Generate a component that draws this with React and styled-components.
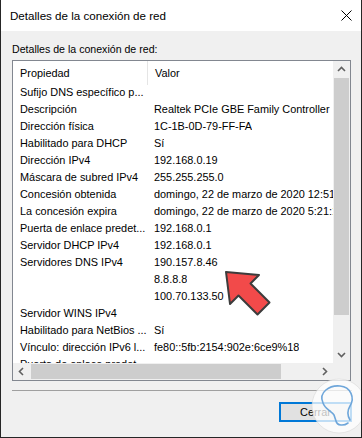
import React from "react";
import styled, { createGlobalStyle } from "styled-components";

const Global = createGlobalStyle`
  html, body { margin: 0; padding: 0; background: #f0f0f0; }
  * { box-sizing: border-box; }
`;

const FONT = `"Liberation Sans", Arial, sans-serif`;

const Window = styled.div`
  position: relative;
  width: 362px;
  height: 438px;
  background: #f0f0f0;
  border: 1px solid #262626;
  border-top: none;
  font-family: ${FONT};
  color: #000;
  display: flex;
  flex-direction: column;
  overflow: hidden;
`;

const TitleBar = styled.div`
  height: 31px;
  flex: none;
  background: #fff;
  display: flex;
  align-items: center;
  justify-content: space-between;
  padding: 0 9px 0 9px;
  font-size: 11.6px;
`;

const Body = styled.div`
  flex: 1;
  display: flex;
  flex-direction: column;
  padding: 11px 10px 0 11px;
`;

const GroupLabel = styled.div`
  font-size: 10.6px;
  line-height: 14px;
  height: 14px;
  margin-bottom: 4px;
  white-space: nowrap;
`;

const ListBox = styled.div`
  height: 321px;
  border: 1px solid #828790;
  background: #fff;
  display: grid;
  grid-template-columns: 1fr 17px;
  grid-template-rows: 1fr 17px;
`;

const Content = styled.div`
  overflow: hidden;
  font-size: 10.9px;
  white-space: nowrap;
`;

const HeaderRow = styled.div`
  display: flex;
  height: 23px;
  line-height: 23px;
  padding-top: 1px;
`;

const HeaderCell = styled.div`
  flex: none;
  width: ${(p) => (p.$first ? "134px" : "auto")};
  padding-left: 7px;
  border-left: ${(p) => (p.$first ? "none" : "1px solid #e5e5e5")};
  margin-top: -1px;
  padding-top: 1px;
  height: 24px;
`;

const Row = styled.div`
  display: flex;
  height: 17px;
  line-height: 17px;
`;

const Cell = styled.div`
  flex: none;
  width: ${(p) => (p.$first ? "134px" : "auto")};
  padding-left: 7px;
  overflow: hidden;
`;

const VScroll = styled.div`
  background: #f0f0f0;
  display: flex;
  flex-direction: column;
`;

const HScroll = styled.div`
  background: #f0f0f0;
  display: flex;
`;

const Corner = styled.div`
  background: #f0f0f0;
`;

const ArrowBox = styled.div`
  flex: none;
  width: 17px;
  height: 17px;
  display: flex;
  align-items: center;
  justify-content: center;
`;

const VThumb = styled.div`
  height: ${(p) => p.$len}px;
  margin: 0 1px;
  background: #cdcdcd;
`;

const HThumb = styled.div`
  width: ${(p) => p.$len}px;
  margin: 1px 0 1px 1px;
  background: #cdcdcd;
`;

const Spacer = styled.div`
  flex: 1;
`;

const Separator = styled.div`
  margin-top: 9px;
  height: 1px;
  background: #a0a0a0;
  margin-right: -1px;
`;

const ButtonRow = styled.div`
  display: flex;
  justify-content: flex-end;
  margin-top: 11px;
`;

const Button = styled.button`
  width: 73px;
  height: 20px;
  background: #e1e1e1;
  border: 2px solid #0078d7;
  font-family: ${FONT};
  font-size: 10.9px;
  color: #000;
  padding: 0;
  margin-right: -1px;
`;

const Overlay = styled.svg`
  position: absolute;
  left: 0;
  top: 0;
  pointer-events: none;
`;

const Chevron = ({ dir }) => {
  const rot = { up: 0, down: 180, left: -90, right: 90 }[dir];
  return (
    <svg width="9" height="9" viewBox="0 0 9 9">
      <path
        d="M1 6 L4.5 2.5 L8 6"
        fill="none"
        stroke="#606060"
        strokeWidth="1.6"
        transform={`rotate(${rot} 4.5 4.5)`}
      />
    </svg>
  );
};

const rows = [
  ["Sufijo DNS específico p...", ""],
  ["Descripción", "Realtek PCIe GBE Family Controller"],
  ["Dirección física", "1C-1B-0D-79-FF-FA"],
  ["Habilitado para DHCP", "Sí"],
  ["Dirección IPv4", "192.168.0.19"],
  ["Máscara de subred IPv4", "255.255.255.0"],
  ["Concesión obtenida", "domingo, 22 de marzo de 2020 12:51:18"],
  ["La concesión expira", "domingo, 22 de marzo de 2020 5:21:18"],
  ["Puerta de enlace predet...", "192.168.0.1"],
  ["Servidor DHCP IPv4", "192.168.0.1"],
  ["Servidores DNS IPv4", "190.157.8.46"],
  ["", "8.8.8.8"],
  ["", "100.70.133.50"],
  ["Servidor WINS IPv4", ""],
  ["Habilitado para NetBios ...", "Sí"],
  ["Vínculo: dirección IPv6 l...", "fe80::5fb:2154:902e:6ce9%18"],
  ["Puerta de enlace predet...", ""],
];

export default function App() {
  return (
    <>
      <Global />
      <Window>
        <TitleBar>
          <span>Detalles de la conexión de red</span>
          <svg width="11" height="11" viewBox="0 0 11 11">
            <path d="M0.5 0.5 L10.5 10.5 M10.5 0.5 L0.5 10.5" stroke="#000" strokeWidth="1" />
          </svg>
        </TitleBar>
        <Body>
          <GroupLabel>Detalles de la conexión de red:</GroupLabel>
          <ListBox>
            <Content>
              <HeaderRow>
                <HeaderCell $first>Propiedad</HeaderCell>
                <HeaderCell>Valor</HeaderCell>
              </HeaderRow>
              {rows.map(([k, v], i) => (
                <Row key={i}>
                  <Cell $first>{k}</Cell>
                  <Cell>{v}</Cell>
                </Row>
              ))}
            </Content>
            <VScroll>
              <ArrowBox><Chevron dir="up" /></ArrowBox>
              <VThumb $len={237} />
              <Spacer />
              <ArrowBox><Chevron dir="down" /></ArrowBox>
            </VScroll>
            <HScroll>
              <ArrowBox><Chevron dir="left" /></ArrowBox>
              <HThumb $len={250} />
              <Spacer />
              <ArrowBox><Chevron dir="right" /></ArrowBox>
            </HScroll>
            <Corner />
          </ListBox>
          <Separator />
          <ButtonRow>
            <Button>Cerrar</Button>
          </ButtonRow>
        </Body>
        <Overlay width="362" height="438" viewBox="0 0 362 438">
          <polygon
            points="225,272 258,275 249.5,283.5 268.5,302.5 256.5,314.5 237.5,295.5 229,304"
            fill="#f24a4a"
            stroke="#3c3c3c"
            strokeWidth="2"
            strokeLinejoin="round"
          />
          <circle cx="338" cy="406" r="27" fill="#ffffff" fillOpacity="0.75" stroke="#d8d8d8" strokeOpacity="0.6" />
          <path
            d="M322 403 C317 392 329 385 339 386 C350 387 354 398 349 406 C346 411 346 415 349 420 M322 403 C324 409 330 411 333 415 L335 421 C336 426 343 426 347 423"
            fill="none"
            stroke="#6ea6da"
            strokeWidth="1.6"
            strokeLinecap="round"
          />
        </Overlay>
      </Window>
    </>
  );
}
